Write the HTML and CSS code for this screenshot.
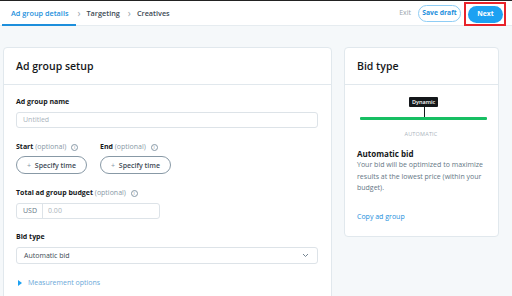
FILE: index.html
```html
<!DOCTYPE html>
<html lang="en">
<head>
  <meta charset="UTF-8" />
  <title>Ad group details</title>
  <link rel="stylesheet" href="styles.css">
</head>
<body>
  <header class="topbar">
    <nav class="steps">
      <span class="step active">Ad group details</span>
      <span class="chev">&#8250;</span>
      <span class="step">Targeting</span>
      <span class="chev">&#8250;</span>
      <span class="step">Creatives</span>
    </nav>
    <div class="actions">
      <span class="exit">Exit</span>
      <button class="btn btn-outline">Save draft</button>
      <span class="highlight"><button class="btn btn-primary">Next</button></span>
    </div>
  </header>

  <main class="page">
    <section class="card setup">
      <h2 class="card-title">Ad group setup</h2>
      <div class="card-body">
        <label class="label">Ad group name</label>
        <div class="input"><span class="placeholder">Untitled</span></div>

        <div class="row">
          <div class="col">
            <label class="label">Start <span class="opt">(optional)</span> <span class="info">i</span></label>
            <button class="pill"><span class="plus">+</span> Specify time</button>
          </div>
          <div class="col">
            <label class="label">End <span class="opt">(optional)</span> <span class="info">i</span></label>
            <button class="pill"><span class="plus">+</span> Specify time</button>
          </div>
        </div>

        <label class="label">Total ad group budget <span class="opt">(optional)</span> <span class="info">i</span></label>
        <div class="input budget">
          <span class="currency">USD</span>
          <span class="placeholder">0.00</span>
        </div>

        <label class="label">Bid type</label>
        <div class="input select">
          <span>Automatic bid</span>
          <svg width="7" height="5" viewBox="0 0 7 5"><path d="M1 1l2.5 2.5L6 1" fill="none" stroke="#657786" stroke-width="0.9"/></svg>
        </div>

        <div class="measure">
          <svg width="4" height="6" viewBox="0 0 4 6"><path d="M0 0l4 3L0 6z" fill="#1da1f2"/></svg>
          <span>Measurement options</span>
        </div>
      </div>
    </section>

    <section class="card bid">
      <h2 class="card-title">Bid type</h2>
      <div class="card-body">
        <div class="meter">
          <span class="tip">Dynamic</span>
          <span class="stem"></span>
          <span class="track"></span>
        </div>
        <div class="meter-label">AUTOMATIC</div>
        <div class="bid-title">Automatic bid</div>
        <p class="bid-desc">Your bid will be optimized to maximize results at the lowest price (within your budget).</p>
        <a class="link">Copy ad group</a>
      </div>
    </section>
  </main>
</body>
</html>
```

FILE: styles.css
```css
* {
  box-sizing: border-box;
}
body {
  margin: 0;
  font-family: 'Open Sans', 'Noto Sans', sans-serif;
  font-size: 7px;
  line-height: 10px;
  background: #f5f8fa;
  color: #14171a;
  border-top: 1px solid #222;
  height: 296px;
  overflow: hidden;
}
.topbar {
  height: 25px;
  background: #fff;
  border-bottom: 1px solid #e6ecf0;
  display: flex;
  justify-content: space-between;
  align-items: stretch;
  padding: 0 8px 0 2px;
}
.steps {
  display: flex;
  align-items: stretch;
  font-size: 7.3px;
  font-weight: 600;
}
.step {
  display: flex;
  align-items: center;
  color: #3d4a55;
  padding-right: 7px;
}
.step.active {
  color: #1d8fdc;
  padding: 0 8px 0 9px;
  border-bottom: 2px solid #1d8fdc;
  margin-bottom: -1px;
}
.chev {
  display: flex;
  align-items: center;
  color: #9aa5ad;
  font-size: 10px;
  font-weight: 400;
  padding: 0 6px 1px 1px;
}
.actions {
  display: flex;
  align-items: center;
}
.exit {
  font-size: 7px;
  color: #9aa5ad;
  margin-right: 7px;
}
.btn {
  font-family: inherit;
  font-size: 6.8px;
  font-weight: 700;
  height: 17px;
  border-radius: 9px;
  line-height: 1;
  cursor: pointer;
}
.btn-outline {
  background: #fff;
  color: #1d8fdc;
  border: 1px solid #8ecdf5;
  width: 43px;
  padding: 0;
  margin-right: 3px;
}
.btn-primary {
  background: #1da1f2;
  color: #fff;
  border: none;
  width: 35px;
  padding: 0;
}
.highlight {
  display: flex;
  align-items: center;
  border: 2px solid #e8232a;
  padding: 0 1px 0 2px;
  height: 24px;
  margin-top: 2px;
  margin-right: -2px;
}
.page {
  display: grid;
  grid-template-columns: 329px 155px;
  column-gap: 12px;
  padding: 21px 0 0 3px;
}
.card {
  background: #fff;
  border: 1px solid #e1e8ed;
  border-radius: 4px;
}
.setup {
  height: 260px;
}
.bid {
  height: 190px;
}
.card-title {
  margin: 0;
  height: 37px;
  display: flex;
  align-items: center;
  padding: 0 13px 0 12px;
  font-size: 10.5px;
  font-weight: 600;
  border-bottom: 1px solid #e1e8ed;
}
.card-body {
  padding: 12px 13px 0 12px;
}
.setup .card-body {
  display: flex;
  flex-direction: column;
  padding-right: 13px;
}
.label {
  display: block;
  font-size: 7px;
  font-weight: 700;
  line-height: 10px;
  height: 10px;
  margin-bottom: 5px;
  white-space: nowrap;
}
.opt {
  font-weight: 400;
  color: #8899a6;
}
.info {
  display: inline-flex;
  align-items: center;
  justify-content: center;
  width: 7px;
  height: 7px;
  border: 0.8px solid #8899a6;
  border-radius: 50%;
  font-size: 5px;
  line-height: 1;
  font-weight: 400;
  color: #8899a6;
  margin-left: 3px;
  vertical-align: 0;
}
.input {
  height: 16px;
  border: 1px solid #dde3e8;
  border-radius: 3px;
  display: flex;
  align-items: center;
  padding: 0 6px;
  font-size: 7px;
  color: #3d4a55;
  margin-bottom: 14px;
}
.placeholder {
  color: #aab4bc;
}
.row {
  display: flex;
  gap: 13px;
  margin-bottom: 14px;
}
.row .label {
  margin-bottom: 4px;
}
.pill {
  display: block;
  font-family: inherit;
  height: 18px;
  width: 71px;
  border: 1px solid #8899a6;
  border-radius: 9px;
  background: #fff;
  font-size: 7px;
  font-weight: 600;
  color: #3d4a55;
  padding: 0;
}
.plus {
  color: #8899a6;
  font-weight: 400;
  margin-right: 2px;
}
.budget {
  width: 144px;
  padding: 0;
  margin-bottom: 13px;
}
.currency {
  height: 100%;
  display: flex;
  align-items: center;
  padding: 0 5px 0 6px;
  border-right: 1px solid #dde3e8;
  color: #657786;
  margin-right: 5px;
}
.select {
  height: 17px;
  justify-content: space-between;
  padding: 0 8px 0 7px;
}
.measure {
  display: flex;
  align-items: center;
  gap: 6px;
  padding-left: 2px;
  font-size: 7px;
  color: #6aa8d8;
}
.meter {
  position: relative;
  height: 23px;
  margin: 0 0 0 3px;
  width: 127px;
}
.tip {
  position: absolute;
  left: 49px;
  top: 0;
  background: #14171a;
  color: #fff;
  font-size: 5.5px;
  font-weight: 600;
  line-height: 10px;
  padding: 0 3px;
  border-radius: 1px;
}
.stem {
  position: absolute;
  left: 64px;
  top: 10px;
  width: 1px;
  height: 10px;
  background: #14171a;
}
.track {
  position: absolute;
  left: 0;
  right: 0;
  top: 20px;
  height: 3px;
  background: #17bf63;
  border-radius: 1px;
}
.meter-label {
  text-align: center;
  font-size: 5.5px;
  line-height: 8px;
  color: #aab4bc;
  margin-top: 10px;
  letter-spacing: 0.2px;
}
.bid-title {
  font-size: 8px;
  font-weight: 700;
  margin-top: 10px;
  line-height: 11px;
}
.bid-desc {
  margin: 0;
  font-size: 7px;
  line-height: 11.5px;
  color: #657786;
}
.link {
  display: block;
  margin-top: 18px;
  font-size: 7px;
  color: #1d8fdc;
}
```
